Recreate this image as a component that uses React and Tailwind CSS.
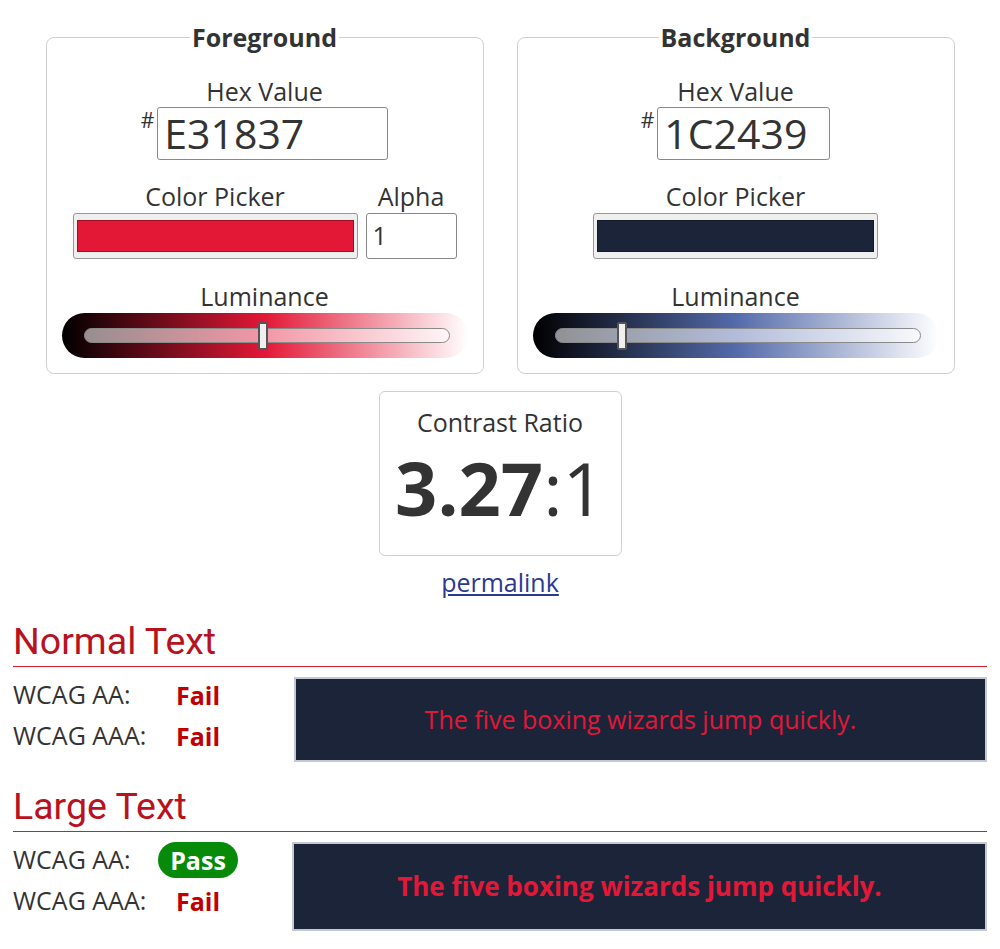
import React from 'react';

const colors = {
  fg: { hex: 'E31837', mid: '#e31837', thumb: 201 },
  bg: { hex: '1C2439', mid: '#546bab', thumb: 89 },
};

// gradient bar with the luminance track and its handle
const Luminance = ({ mid, thumb }) => (
  <div
    className="relative h-[45px] w-[406px] rounded-full"
    style={{ background: `linear-gradient(to right, #000 0%, ${mid} 50%, #fff 100%)` }}
  >
    <div className="absolute left-[22px] right-[18px] top-[15px] h-[15px] rounded-full border border-[#8a8a8a] bg-white/55" />
    <div
      className="absolute top-[9px] h-[28px] w-[10px] -translate-x-1/2 rounded-[2px] border-2 border-[#555] bg-[#efefef]"
      style={{ left: thumb }}
    />
  </div>
);

const ColorPanel = ({ title, hex, swatch, inputWidth, withAlpha, mid, thumb }) => (
  <fieldset className="w-[438px] rounded-lg border border-[#cfcfcf] pb-[15px]">
    <legend className="mx-auto px-[2px] text-[25px] font-bold leading-[32px] text-[#333]">{title}</legend>
    <div className="flex flex-col items-center pt-[23px]">
      <div className="text-[25px] leading-[30px] text-[#333]">Hex Value</div>
      <div className="mt-px flex items-start">
        <span className="mr-[3px] mt-[3px] text-[21px] leading-none text-[#333]">#</span>
        <div
          className="flex h-[53px] items-center rounded-[3px] border border-[#888] px-[6px] text-[41px] text-[#333]"
          style={{ width: inputWidth }}
        >
          {hex}
        </div>
      </div>

      <div className="mt-[21px] flex items-end gap-[8px]">
        <div className="flex flex-col items-center">
          <div className="text-[25px] leading-[30px] text-[#333]">Color Picker</div>
          <div className="mt-[2px] h-[46px] w-[285px] rounded-[3px] border border-[#999] bg-[#efefef] px-[3px] py-[6px]">
            <div className="h-full w-full border border-black/30" style={{ background: swatch }} />
          </div>
        </div>
        {withAlpha && (
          <div className="flex flex-col items-center">
            <div className="text-[25px] leading-[30px] text-[#333]">Alpha</div>
            <div className="mt-[2px] flex h-[46px] w-[91px] items-center rounded-[3px] border border-[#888] px-[6px] text-[25px] text-[#333]">
              1
            </div>
          </div>
        )}
      </div>

      <div className="mt-[22px] text-[25px] leading-[30px] text-[#333]">Luminance</div>
      <div className="mt-[2px]">
        <Luminance mid={mid} thumb={thumb} />
      </div>
    </div>
  </fieldset>
);

const Status = ({ pass }) =>
  pass ? (
    <span className="rounded-full bg-[#078a07] px-[12px] py-px text-[25px] font-bold leading-[34px] text-white">Pass</span>
  ) : (
    <span className="text-[25px] font-bold leading-[34px] text-[#c00000]">Fail</span>
  );

const Section = ({ title, aa, aaa, large }) => (
  <div>
    <h2 className="border-b border-[#d0202c] pb-[3px] font-['Roboto'] text-[37.5px] leading-[44px] text-[#b8121f]">
      {title}
    </h2>
    <div className="mt-[9px] flex">
      <div className="w-[279px] shrink-0">
        <div className="flex h-[38px] items-center">
          <span className="w-[145px] text-[25px] text-[#333]">WCAG AA:</span>
          <span className="flex w-[80px] justify-center">
            <Status pass={aa} />
          </span>
        </div>
        <div className="mt-[3px] flex h-[38px] items-center">
          <span className="w-[145px] text-[25px] text-[#333]">WCAG AAA:</span>
          <span className="flex w-[80px] justify-center">
            <Status pass={aaa} />
          </span>
        </div>
      </div>
      <div
        className={
          'mt-px flex flex-1 items-center justify-center border-2 border-[#c4c8d0] bg-[#1c2439] text-[#e31837] ' +
          (large ? 'h-[89px] text-[26px] font-bold' : 'ml-[2px] h-[85px] text-[25px]')
        }
      >
        The five boxing wizards jump quickly.
      </div>
    </div>
  </div>
);

export default function App() {
  return (
    <div className="min-h-screen bg-white px-[13px] pb-4 pt-[21px] font-['Open_Sans',sans-serif] text-[#333]">
      <div className="flex justify-center gap-[33px]">
        <ColorPanel title="Foreground" hex={colors.fg.hex} swatch="#e31837" inputWidth={231} withAlpha mid={colors.fg.mid} thumb={colors.fg.thumb} />
        <ColorPanel title="Background" hex={colors.bg.hex} swatch="#1c2439" inputWidth={173} mid={colors.bg.mid} thumb={colors.bg.thumb} />
      </div>

      <div className="mt-[17px] flex flex-col items-center">
        <div className="flex h-[165px] w-[243px] flex-col items-center rounded-md border border-[#cfcfcf] pt-[15px]">
          <div className="text-[25px] leading-[30px] text-[#333]">Contrast Ratio</div>
          <div className="mt-[6px] text-[74px] leading-[90px] text-[#333]">
            <span className="font-bold">3.27</span>:1
          </div>
        </div>
        <a href="#" className="mt-[10px] text-[25px] leading-[32px] text-[#2b3a8e] underline">
          permalink
        </a>
      </div>

      <div className="mt-[21px]">
        <Section title="Normal Text" aa={false} aaa={false} />
      </div>
      <div className="mt-[22px]">
        <Section title="Large Text" aa aaa={false} large />
      </div>
    </div>
  );
}
